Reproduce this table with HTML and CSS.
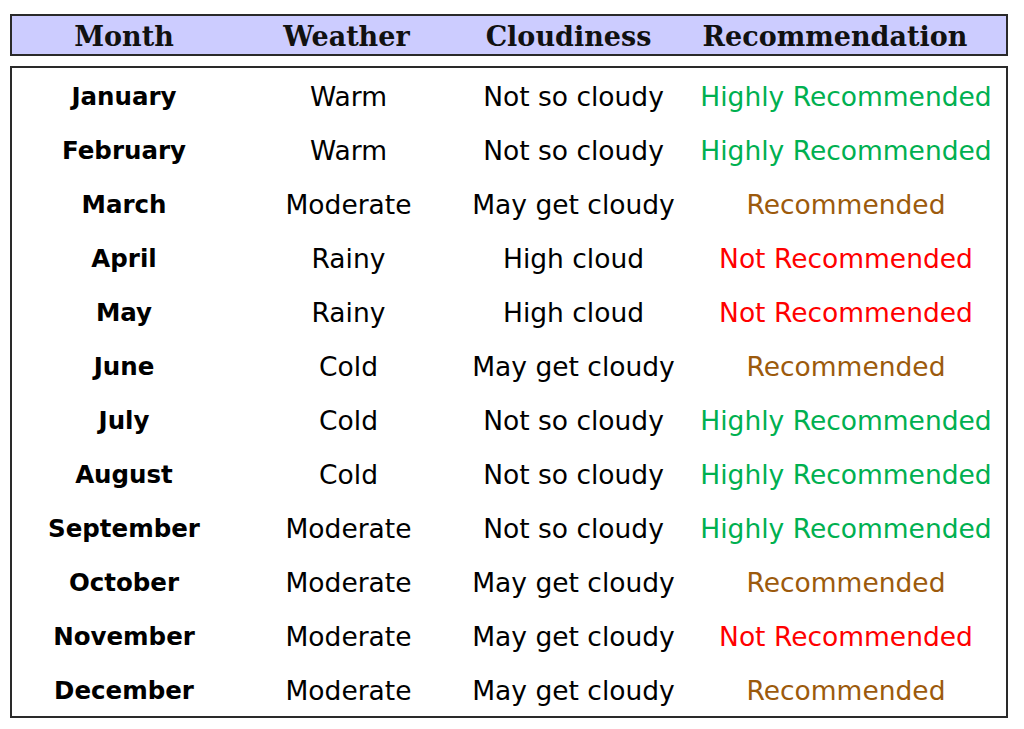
FILE: index.html
```html
<!DOCTYPE html>
<html>
<head>
<meta charset="utf-8">
<link rel="stylesheet" href="styles.css">
</head>
<body>
<div class="page">
  <div class="head">
    <div class="hc">Month</div>
    <div class="hc">Weather</div>
    <div class="hc">Cloudiness</div>
    <div class="hc last">Recommendation</div>
  </div>
  <div class="tbl">
    <div class="m">January</div><div class="c">Warm</div><div class="c">Not so cloudy</div><div class="c hi">Highly Recommended</div>
    <div class="m">February</div><div class="c">Warm</div><div class="c">Not so cloudy</div><div class="c hi">Highly Recommended</div>
    <div class="m">March</div><div class="c">Moderate</div><div class="c">May get cloudy</div><div class="c re">Recommended</div>
    <div class="m">April</div><div class="c">Rainy</div><div class="c">High cloud</div><div class="c no">Not Recommended</div>
    <div class="m">May</div><div class="c">Rainy</div><div class="c">High cloud</div><div class="c no">Not Recommended</div>
    <div class="m">June</div><div class="c">Cold</div><div class="c">May get cloudy</div><div class="c re">Recommended</div>
    <div class="m">July</div><div class="c">Cold</div><div class="c">Not so cloudy</div><div class="c hi">Highly Recommended</div>
    <div class="m">August</div><div class="c">Cold</div><div class="c">Not so cloudy</div><div class="c hi">Highly Recommended</div>
    <div class="m">September</div><div class="c">Moderate</div><div class="c">Not so cloudy</div><div class="c hi">Highly Recommended</div>
    <div class="m">October</div><div class="c">Moderate</div><div class="c">May get cloudy</div><div class="c re">Recommended</div>
    <div class="m">November</div><div class="c">Moderate</div><div class="c">May get cloudy</div><div class="c no">Not Recommended</div>
    <div class="m">December</div><div class="c">Moderate</div><div class="c">May get cloudy</div><div class="c re">Recommended</div>
  </div>
</div>
</body>
</html>
```

FILE: styles.css
```css
html, body { margin: 0; padding: 0; background: #fff; }
.page {
  width: 998px;
  padding: 14px 0 0 10px;
  display: flex;
  flex-direction: column;
  gap: 10px;
}
.head, .tbl {
  display: grid;
  grid-template-columns: 224px 225px 225px 1fr;
  border: 2px solid #2a2a2a;
  box-sizing: border-box;
}
.head {
  background: #ccccff;
  height: 42px;
  align-items: center;
  grid-template-columns: 224px 221px 223px 1fr;
}
.hc {
  text-align: center;
  font-family: "DejaVu Serif", "Liberation Serif", serif;
  font-weight: bold;
  font-size: 27px;
  color: #111;
  line-height: 38px;
  padding-top: 2px;
  white-space: nowrap;
}
.hc.last { padding-right: 16px; }
.tbl {
  grid-auto-rows: 54px;
  align-items: center;
  background: #fff;
}
.m, .c {
  text-align: center;
  font-family: "DejaVu Sans", sans-serif;
  font-size: 26.5px;
  color: #000;
  white-space: nowrap;
  padding-top: 3px;
}
.m { font-weight: bold; font-size: 24.5px; }
.hi { color: #00b050; }
.re { color: #9c5a0c; }
.no { color: #ff0000; }
```
